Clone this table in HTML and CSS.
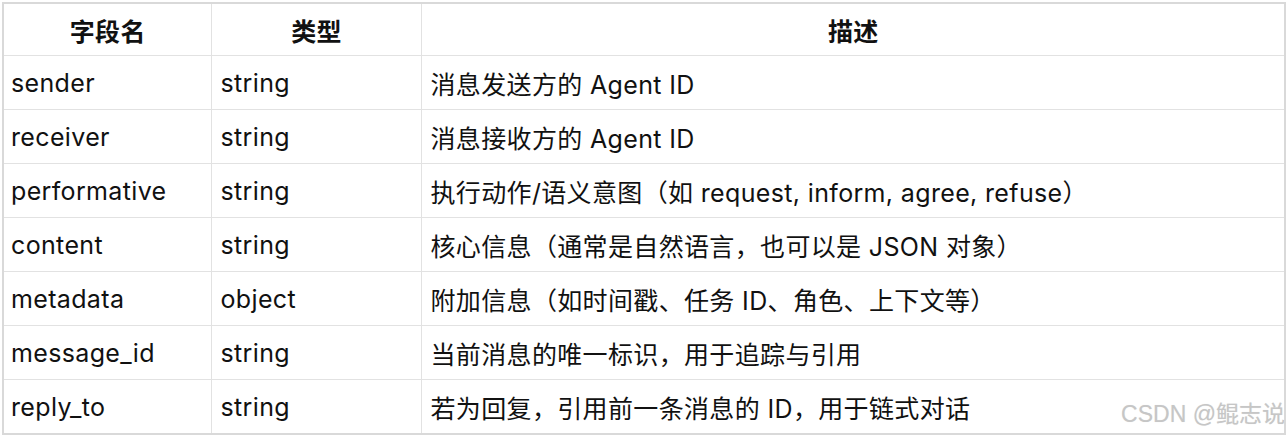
FILE: index.html
```html
<!DOCTYPE html>
<html lang="zh-CN">
<head>
    <meta charset="UTF-8">
    <title>消息字段</title>
    <link rel="stylesheet" href="styles.css">
</head>
<body>
    <div class="page">
        <table class="fields">
            <colgroup>
                <col class="col-name">
                <col class="col-type">
                <col class="col-desc">
            </colgroup>
            <thead>
                <tr>
                    <th>字段名</th>
                    <th>类型</th>
                    <th>描述</th>
                </tr>
            </thead>
            <tbody>
                <tr>
                    <td>sender</td>
                    <td>string</td>
                    <td>消息发送方的 Agent ID</td>
                </tr>
                <tr>
                    <td>receiver</td>
                    <td>string</td>
                    <td>消息接收方的 Agent ID</td>
                </tr>
                <tr>
                    <td>performative</td>
                    <td>string</td>
                    <td>执行动作/语义意图（如 request, inform, agree, refuse）</td>
                </tr>
                <tr>
                    <td>content</td>
                    <td>string</td>
                    <td>核心信息（通常是自然语言，也可以是 JSON 对象）</td>
                </tr>
                <tr>
                    <td>metadata</td>
                    <td>object</td>
                    <td>附加信息（如时间戳、任务 ID、角色、上下文等）</td>
                </tr>
                <tr>
                    <td>message_id</td>
                    <td>string</td>
                    <td>当前消息的唯一标识，用于追踪与引用</td>
                </tr>
                <tr>
                    <td>reply_to</td>
                    <td>string</td>
                    <td>若为回复，引用前一条消息的 ID，用于链式对话</td>
                </tr>
            </tbody>
        </table>
        <div class="watermark">CSDN @鲲志说</div>
    </div>
</body>
</html>
```

FILE: styles.css
```css
body {
    margin: 0;
    background: #fff;
    font-family: Inter, "Noto Sans CJK SC", sans-serif;
    color: #111;
}
.page {
    position: relative;
    padding: 2px 2px 0 2px;
}
.fields {
    width: 1284px;
    border-collapse: collapse;
    table-layout: fixed;
    border: 2px solid #d9d9d9;
    font-size: 25px;
    letter-spacing: 0.35px;
}
.col-name {
    width: 208px;
}
.col-type {
    width: 210px;
}
.fields th,
.fields td {
    border: 1px solid #e2e2e2;
    padding: 0 8px 0 9px;
    text-align: left;
    white-space: nowrap;
}
.fields td:first-child {
    padding-left: 7px;
}
.fields th {
    height: 51px;
    text-align: center;
    font-weight: 700;
}
.fields td {
    height: 53px;
}
.watermark {
    position: absolute;
    right: 3px;
    bottom: 6px;
    font-family: "Liberation Sans", "Noto Sans CJK SC", sans-serif;
    font-size: 23px;
    color: #c6c6c6;
    text-shadow: 0 0 1px #e6e6e6;
}
```
